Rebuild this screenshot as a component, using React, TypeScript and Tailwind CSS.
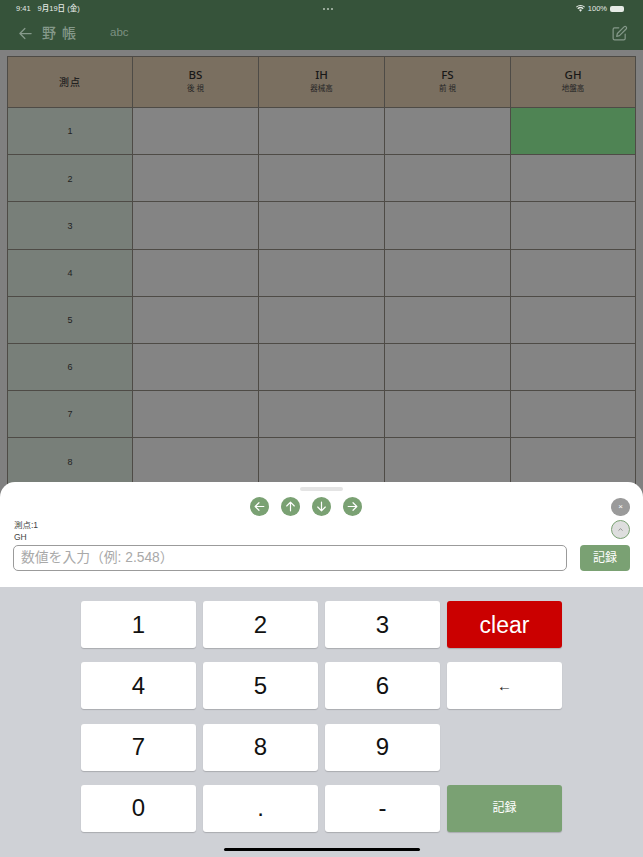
import React from "react";

const jp = { fontFamily: '"Liberation Sans", "Noto Sans CJK JP", sans-serif' };
const thead = { fontFamily: '"Noto Sans", "Noto Sans CJK JP", sans-serif' };

function Arrow({ d }: { d: string }) {
  return (
    <div className="flex h-[19px] w-[19px] items-center justify-center rounded-full bg-[#7aa173]">
      <svg width="13" height="13" viewBox="0 0 24 24" fill="none" stroke="white" strokeWidth="2.2" strokeLinecap="round" strokeLinejoin="round">
        <path d={d} />
      </svg>
    </div>
  );
}

function Key({ label, className = "" }: { label: string; className?: string }) {
  return (
    <div className={`flex h-[47px] w-[115px] items-center justify-center rounded-[3px] shadow-[0_1px_1px_rgba(0,0,0,0.18)] ${className || "bg-white text-[#111] text-[24px]"}`}>
      {label}
    </div>
  );
}

const cols = [
  { a: "BS", b: "後 視" },
  { a: "IH", b: "器械高" },
  { a: "FS", b: "前 視" },
  { a: "GH", b: "地盤高" },
];

export default function App() {
  return (
    <div className="relative h-[857px] w-[643px] overflow-hidden bg-[#808080]" style={jp}>
      <header className="h-[50px] bg-[#36533a] px-4">
        <div className="flex h-[16px] items-center justify-between pt-[1px] text-[7.5px] text-[#e6ebe6]">
          <div className="flex gap-[7px] font-medium">
            <span>9:41</span>
            <span>9月19日 (金)</span>
          </div>
          <div className="flex gap-[2px]">
            <span className="h-[2px] w-[2px] rounded-full bg-[#b8c4b8]" />
            <span className="h-[2px] w-[2px] rounded-full bg-[#b8c4b8]" />
            <span className="h-[2px] w-[2px] rounded-full bg-[#b8c4b8]" />
          </div>
          <div className="flex items-center gap-[3px] pr-[3px]">
            <svg width="9" height="7" viewBox="0 0 18 13" fill="#e6ebe6">
              <path d="M9 13 6 9.6a4.4 4.4 0 0 1 6 0ZM4.4 7.9 2.7 6a9.4 9.4 0 0 1 12.6 0l-1.7 1.9a6.9 6.9 0 0 0-9.2 0ZM1.4 4.6 0 3a13.4 13.4 0 0 1 18 0l-1.4 1.6a11.3 11.3 0 0 0-15.2 0Z" />
            </svg>
            <span>100%</span>
            <div className="h-[6px] w-[14px] rounded-[2px] bg-[#e6ebe6]" />
          </div>
        </div>
        <div className="flex h-[34px] items-center">
          <svg className="ml-[2px]" width="15" height="15" viewBox="0 0 24 24" fill="none" stroke="#85998a" strokeWidth="2" strokeLinecap="round" strokeLinejoin="round">
            <path d="M21 12H3M11 4l-8 8 8 8" />
          </svg>
          <span className="ml-[9px] text-[14px] font-medium tracking-[6px] text-[#85998a]">野帳</span>
          <span className="ml-[28px] text-[11.5px] text-[#7d9182]">abc</span>
          <svg className="mr-[-1px] ml-auto" width="17" height="17" viewBox="0 0 24 24" fill="none" stroke="#85998a" strokeWidth="1.7" strokeLinecap="round" strokeLinejoin="round">
            <path d="M11 4H5a2 2 0 0 0-2 2v13a2 2 0 0 0 2 2h13a2 2 0 0 0 2-2v-6" />
            <path d="M18.4 2.6a2.1 2.1 0 0 1 3 3L12 15l-4 1 1-4Z" />
          </svg>
        </div>
      </header>

      <div className="px-[7px] pt-[6px]">
        <div className="grid w-[629px] grid-cols-[125px_126px_126px_126px_125px] border-t border-l border-[#4e4b46]">
          <div style={thead} className="flex h-[51px] items-center justify-center border-r border-b border-[#4e4b46] bg-[#7a6f60] text-[10px] font-medium tracking-[1px] text-[#222]">測点</div>
          {cols.map((c) => (
            <div key={c.a} style={thead} className="flex h-[51px] flex-col items-center justify-center border-r border-b border-[#4e4b46] bg-[#7a6f60] pb-[3px] text-[#181818]">
              <span className="text-[11.5px] leading-[15px] font-medium">{c.a}</span>
              <span className="text-[7.5px] leading-[12px] text-[#262626]">{c.b}</span>
            </div>
          ))}
          {[1, 2, 3, 4, 5, 6, 7, 8].map((n) => (
            <React.Fragment key={n}>
              <div className="flex h-[47.2px] items-center justify-center border-r border-b border-[#4e4b46] bg-[#787f79] pt-[2px] text-[9px] text-[#222]">{n}</div>
              {[0, 1, 2, 3].map((i) => (
                <div key={i} className={`h-[47.2px] border-r border-b border-[#4e4b46] ${n === 1 && i === 3 ? "bg-[#4f8454]" : "bg-[#848484]"}`} />
              ))}
            </React.Fragment>
          ))}
        </div>
      </div>

      <div className="absolute right-0 bottom-0 left-0">
        <div className="relative h-[105px] rounded-t-[15px] bg-white">
          <div className="flex justify-center pt-[5px]">
            <div className="h-[4px] w-[43px] rounded-full bg-[#e4e4e4]" />
          </div>
          <div className="flex justify-center gap-[12px] pt-[6px] pr-[32px]">
            <Arrow d="M20 12H4M11 5l-7 7 7 7" />
            <Arrow d="M12 20V4M5 11l7-7 7 7" />
            <Arrow d="M12 4v16M5 13l7 7 7-7" />
            <Arrow d="M4 12h16M13 5l7 7-7 7" />
          </div>
          <div className="absolute top-[16px] right-[13px] flex h-[18px] w-[19px] items-center justify-center rounded-full bg-[#9a9a9a] text-[8px] text-white">×</div>
          <div className="absolute top-[38px] right-[13px] flex h-[19px] w-[19px] items-center justify-center rounded-full border border-[#7aa173] bg-[#dedede]">
            <svg width="7" height="7" viewBox="0 0 24 24" fill="none" stroke="#888" strokeWidth="3" strokeLinecap="round" strokeLinejoin="round">
              <path d="M6 15l6-6 6 6" />
            </svg>
          </div>
          <div className="px-[14px] pt-[3px] text-[8.5px] leading-[12px] text-[#444]">
            <div>測点:1</div>
            <div>GH</div>
          </div>
          <div className="flex gap-[13px] px-[13px] pt-[2px]">
            <div className="flex h-[26px] flex-1 items-center rounded-[5px] border border-[#9b9b9b] px-[7px] text-[13.8px] text-[#a9a9a9]">数値を入力（例: 2.548）</div>
            <div className="flex h-[26px] w-[50px] items-center justify-center rounded-[4px] bg-[#7aa173] text-[12px] text-white">記録</div>
          </div>
        </div>
        <div className="h-[270px] bg-[#cfd1d6] pt-[14px] pl-[81px]">
          <div className="grid grid-cols-[115px_115px_115px_115px] gap-x-[7px] gap-y-[14.3px]">
            <Key label="1" />
            <Key label="2" />
            <Key label="3" />
            <Key label="clear" className="bg-[#cb0000] pt-[2px] text-[23px] text-white" />
            <Key label="4" />
            <Key label="5" />
            <Key label="6" />
            <Key label="←" className="bg-white text-[15px] text-[#222]" />
            <Key label="7" />
            <Key label="8" />
            <Key label="9" />
            <div />
            <Key label="0" />
            <Key label="." />
            <Key label="-" />
            <Key label="記録" className="bg-[#7aa173] text-[12px] text-white" />
          </div>
          <div className="mx-auto mt-[16px] h-[3px] w-[196px] -translate-x-[40px] rounded-full bg-black" />
        </div>
      </div>
    </div>
  );
}
